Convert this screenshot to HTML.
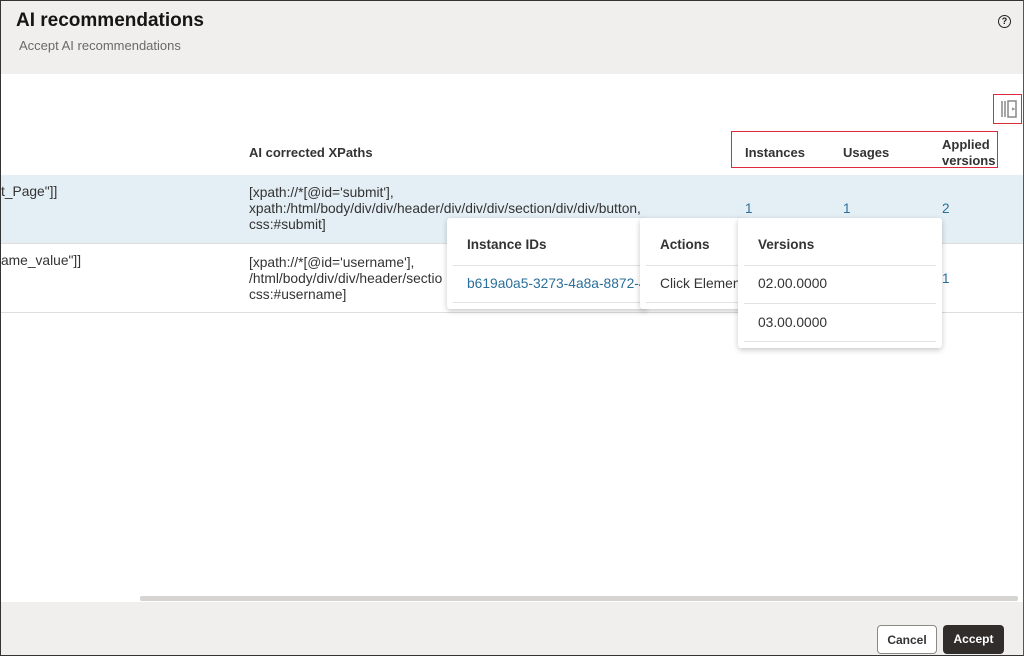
<!DOCTYPE html>
<html><head><style>
*{box-sizing:border-box;margin:0;padding:0}
body{width:1024px;height:656px;overflow:hidden;font-family:"Liberation Sans",sans-serif;color:#161513;background:#fff;position:relative}
.frame{position:absolute;inset:0;border:1px solid #333;border-right-color:#555}
.hdr{position:absolute;left:1px;top:1px;right:1px;height:73px;background:#f1efed}
.t{position:absolute;left:15px;top:9px;font-size:19px;font-weight:bold}
.st{position:absolute;left:18px;top:37px;font-size:13px;color:#6b6966}
.help{position:absolute;right:12px;top:14px;width:13px;height:13px;border:1.5px solid #222;border-radius:50%;font-size:9px;font-weight:bold;text-align:center;line-height:10px}
.abs{position:absolute}
.th{font-size:13px;font-weight:bold;color:#333}
.row1{position:absolute;left:1px;right:1px;top:175px;height:68px;background:#e4eef5}
.line{position:absolute;left:1px;right:1px;height:1px;background:#e0dedb}
.cell{font-size:13.8px;color:#333;line-height:16px}
.lnk{color:#2a6f9b;font-size:13.5px}
.red{position:absolute;border:1px solid #e0283f !important}
.pop{position:absolute;background:#fff;box-shadow:0 2px 6px rgba(0,0,0,.22);border-radius:3px}
.pop .h{position:absolute;left:20px;top:19px;font-size:13.5px;font-weight:bold;color:#333}
.pop .sep{position:absolute;left:6px;right:6px;height:1px;background:#e4e2df}
.pop .v{position:absolute;left:20px;font-size:13.8px;color:#333}
.ftr{position:absolute;left:1px;right:1px;top:602px;bottom:1px;background:#f1efed}
.scroll{position:absolute;left:140px;right:6px;top:596px;height:5px;background:#d6d4d1;border-radius:2px}
.btn{position:absolute;top:625px;height:29px;border-radius:4px;font-size:12px;font-weight:bold;text-align:center;line-height:28px}
</style></head><body>
<div class="hdr"><div class="t">AI recommendations</div><div class="st">Accept AI recommendations</div><div class="help">?</div></div>
<svg class="abs" style="left:999px;top:99px" width="20" height="20" viewBox="0 0 20 20" fill="none" stroke="#888" stroke-width="1.5"><path d="M3 2v16M6 2v16M9 2h8v16H9z"/><path d="M13 9l2 1-2 1" stroke-width="1.2"/></svg>
<div class="abs th" style="left:249px;top:145px">AI corrected XPaths</div>
<div class="abs th" style="left:745px;top:145px">Instances</div>
<div class="abs th" style="left:843px;top:145px">Usages</div>
<div class="abs th" style="left:942px;top:137px;line-height:16px">Applied<br>versions</div>
<div class="row1"></div>
<div class="line" style="top:243px"></div>
<div class="line" style="top:312px"></div>
<div class="abs cell" style="left:1px;top:184px">t_Page"]]</div>
<div class="abs cell" style="left:1px;top:253px">ame_value"]]</div>
<div class="abs cell" style="left:249px;top:185px">[xpath://*[@id='submit'],<br>xpath:/html/body/div/div/header/div/div/div/section/div/div/button,<br>css:#submit]</div>
<div class="abs cell" style="left:249px;top:255px">[xpath://*[@id='username'],<br>/html/body/div/div/header/sectio<br>css:#username]</div>
<div class="abs lnk" style="left:745px;top:201px">1</div>
<div class="abs lnk" style="left:843px;top:201px">1</div>
<div class="abs lnk" style="left:942px;top:201px">2</div>
<div class="abs lnk" style="left:942px;top:271px">1</div>
<div class="pop" style="left:447px;top:218px;width:200px;height:91px;overflow:hidden"><div class="h">Instance IDs</div><div class="sep" style="top:47px"></div><div class="v lnk" style="top:58px;color:#2a6f9b;white-space:nowrap">b619a0a5-3273-4a8a-8872-4</div><div class="sep" style="top:84px"></div></div>
<div class="pop" style="left:640px;top:218px;width:105px;height:91px;overflow:hidden"><div class="h">Actions</div><div class="sep" style="top:47px"></div><div class="v" style="top:58px;white-space:nowrap">Click Element</div><div class="sep" style="top:84px"></div></div>
<div class="pop" style="left:738px;top:218px;width:204px;height:130px"><div class="h">Versions</div><div class="sep" style="top:47px"></div><div class="v" style="top:58px">02.00.0000</div><div class="sep" style="top:85px"></div><div class="v" style="top:97px">03.00.0000</div><div class="sep" style="top:123px"></div></div>
<div class="scroll"></div>
<div class="ftr"></div>
<div class="btn" style="left:877px;width:60px;background:#fff;border:1px solid #8c8a87;color:#333">Cancel</div>
<div class="btn" style="left:943px;width:61px;background:#312d2a;color:#fff">Accept</div>
<div class="frame"></div>
<div class="red" style="left:993px;top:94px;width:29px;height:30px"></div>
<div class="red" style="left:731px;top:131px;width:267px;height:37px"></div>
</body></html>
